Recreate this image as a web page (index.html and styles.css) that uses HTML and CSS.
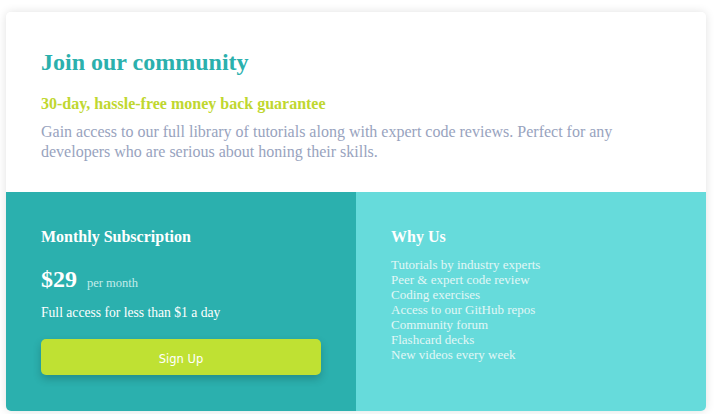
FILE: index.html
```html
<!DOCTYPE html>
<html>
<head>
<meta charset="utf-8">
<link rel="stylesheet" href="styles.css">
</head>
<body>
<div class="card">
  <section class="top">
    <h1 class="title">Join our community</h1>
    <h2 class="subtitle">30-day, hassle-free money back guarantee</h2>
    <p class="intro">Gain access to our full library of tutorials along with expert code reviews. Perfect for any developers who are serious about honing their skills.</p>
  </section>
  <div class="bottom">
    <section class="col sub">
      <h3 class="col-title">Monthly Subscription</h3>
      <div class="price"><span class="amount">$29</span><span class="period">per month</span></div>
      <p class="note">Full access for less than $1 a day</p>
      <button class="btn">Sign Up</button>
    </section>
    <section class="col why">
      <h3 class="col-title">Why Us</h3>
      <ul class="list">
        <li>Tutorials by industry experts</li>
        <li>Peer &amp; expert code review</li>
        <li>Coding exercises</li>
        <li>Access to our GitHub repos</li>
        <li>Community forum</li>
        <li>Flashcard decks</li>
        <li>New videos every week</li>
      </ul>
    </section>
  </div>
</div>
</body>
</html>
```

FILE: styles.css
```css
* { box-sizing: border-box; }
body {
  margin: 0;
  padding: 12px 6px;
  background: #ffffff;
  font-family: "Liberation Serif", "Times New Roman", serif;
}
.card {
  width: 700px;
  border-radius: 5px;
  overflow: hidden;
  box-shadow: 0 0 10px rgba(0,0,0,0.12);
}
.top {
  background: #fff;
  padding: 35px 35px 30px;
  height: 180px;
}
.title {
  margin: 0;
  font-size: 24px;
  font-weight: bold;
  color: #2bb0ad;
  line-height: 30px;
}
.subtitle {
  margin: 17px 0 0;
  font-size: 16px;
  font-weight: bold;
  color: #c0d72f;
  line-height: 20px;
}
.intro {
  margin: 8px 0 0;
  font-size: 16px;
  color: #98a3be;
  line-height: 20px;
}
.bottom {
  display: grid;
  grid-template-columns: 350px 350px;
  height: 219px;
}
.col {
  padding: 35px;
  color: #fff;
}
.sub { background: #2bb0ae; }
.why { background: #66dbdb; }
.col-title {
  margin: 0;
  font-size: 16px;
  font-weight: bold;
  line-height: 20px;
}
.price {
  display: flex;
  align-items: baseline;
  gap: 10px;
  margin-top: 19px;
}
.amount {
  font-size: 24px;
  font-weight: bold;
}
.period {
  font-size: 12.5px;
  color: #c3ecea;
}
.note {
  margin: 11px 0 0;
  font-size: 13.6px;
  line-height: 17px;
}
.btn {
  margin-top: 18px;
  width: 280px;
  height: 36px;
  padding: 3px 0 0;
  border: none;
  border-radius: 5px;
  background: #bfe133;
  color: #fff;
  font-family: "DejaVu Sans", sans-serif;
  font-size: 11.5px;
  box-shadow: 0 4px 8px rgba(0,0,0,0.2);
}
.list {
  list-style: none;
  margin: 10px 0 0;
  padding: 0;
  font-size: 13px;
  line-height: 15px;
  color: #e2f7f6;
}
```
